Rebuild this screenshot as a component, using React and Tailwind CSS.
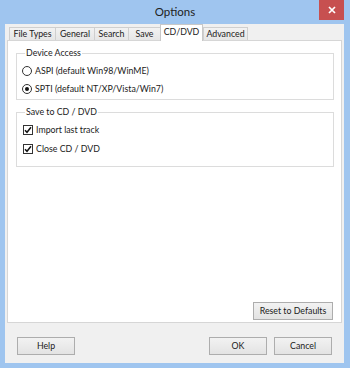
export default function App() {
  const font = { fontFamily: 'Lato, "Noto Sans", sans-serif' };
  const tabs = [
    { label: "File Types", w: "w-[47px]" },
    { label: "General", w: "w-[40px]" },
    { label: "Search", w: "w-[35px]" },
    { label: "Save", w: "w-[33px]" },
    { label: "CD/DVD", w: "w-[43px]", active: true },
    { label: "Advanced", w: "w-[45px]" },
  ];
  const btn =
    "h-[18px] border border-[#adadad] bg-gradient-to-b from-[#f2f2f2] to-[#e3e3e3] flex items-center justify-center text-[8.8px] text-[#1a1a1a]";
  return (
    <div className="w-[350px] h-[368px] bg-[#9fc5ef] flex flex-col" style={font}>
      <div className="h-[24px] shrink-0 grid grid-cols-[1fr_auto_1fr]">
        <div />
        <div className="text-[11.5px] leading-none text-[#222] pt-[6px]">Options</div>
        <div className="flex justify-end pr-[6px]">
          <div className="w-[25px] h-[20px] bg-[#c75050] flex items-center justify-center">
            <svg width="8" height="8" viewBox="0 0 8 8">
              <path d="M1 1L7 7M7 1L1 7" stroke="white" strokeWidth="1.7" />
            </svg>
          </div>
        </div>
      </div>
      <div className="flex-1 ml-[5px] mr-[6px] mb-[5px] bg-[#f0f0f0] flex flex-col px-[2px]">
        <div className="h-[16px] flex items-end pl-[2px] relative z-10">
          {tabs.map((t) =>
            t.active ? (
              <div
                key={t.label}
                className={`${t.w} h-[17px] -mb-px bg-white border border-b-0 border-[#c8c8c8] flex items-center justify-center text-[8.8px] text-[#1a1a1a] leading-none pb-[2px]`}
              >
                {t.label}
              </div>
            ) : (
              <div
                key={t.label}
                className={`${t.w} h-[13px] -mr-px bg-gradient-to-b from-[#f2f2f2] to-[#e6e6e6] border border-b-0 border-[#cfcfcf] flex items-center justify-center text-[8.8px] text-[#1a1a1a] leading-none`}
              >
                {t.label}
              </div>
            )
          )}
        </div>
        <div className="h-[283px] bg-white border border-[#d6d6d6] flex flex-col text-[8.8px] text-[#1a1a1a]">
          <fieldset className="ml-[8px] mr-[7px] mt-[6px] border border-[#dcdcdc] pb-[1px] px-[5px]">
            <legend className="ml-[3px] px-[1px] leading-[12px]">Device Access</legend>
            <div className="pt-[3px]">
              <div className="h-[18px] flex items-center gap-[3px]">
                <span className="w-[10px] h-[10px] rounded-full border border-[#333] bg-white" />
                <span>ASPI (default Win98/WinME)</span>
              </div>
              <div className="h-[18px] flex items-center gap-[3px]">
                <span className="w-[10px] h-[10px] rounded-full border border-[#333] bg-white flex items-center justify-center">
                  <span className="w-[4px] h-[4px] rounded-full bg-[#111]" />
                </span>
                <span>SPTI (default NT/XP/Vista/Win7)</span>
              </div>
            </div>
          </fieldset>
          <fieldset className="ml-[8px] mr-[7px] mt-[6px] border border-[#dcdcdc] pb-[8px] px-[6px]">
            <legend className="ml-[2px] px-[1px] leading-[12px]">Save to CD / DVD</legend>
            <div className="pt-[2px]">
              {["Import last track", "Close CD / DVD"].map((l) => (
                <div key={l} className="h-[19px] flex items-center gap-[3px]">
                  <span className="w-[10px] h-[10px] border border-[#333] bg-white flex items-center justify-center">
                    <svg width="8" height="8" viewBox="0 0 8 8">
                      <path d="M1 4.2L3 6.3L7 1.3" fill="none" stroke="#111" strokeWidth="1.5" />
                    </svg>
                  </span>
                  <span>{l}</span>
                </div>
              ))}
            </div>
          </fieldset>
          <div className={`${btn} mt-auto self-end mr-[8px] mb-[2px] w-[80px]`}>Reset to Defaults</div>
        </div>
        <div className="flex-1 flex items-start pt-[14px] px-[10px]">
          <div className={`${btn} w-[58px]`}>Help</div>
          <div className={`${btn} w-[58px] ml-auto border-[#6ba7e4]`}>OK</div>
          <div className={`${btn} w-[58px] ml-[7px]`}>Cancel</div>
        </div>
      </div>
    </div>
  );
}
